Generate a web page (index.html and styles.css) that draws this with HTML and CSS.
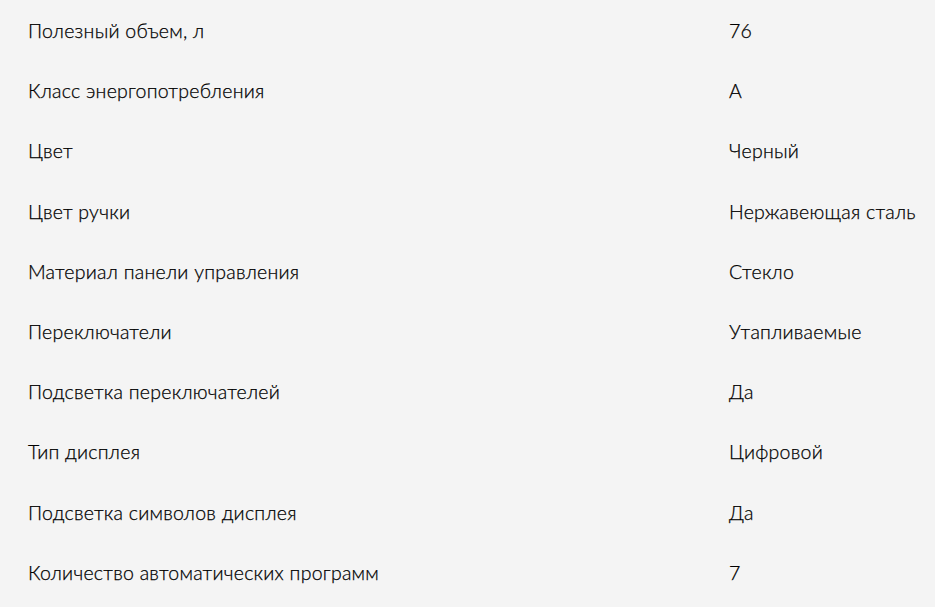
FILE: index.html
```html
<!DOCTYPE html>
<html lang="ru">
<head>
<meta charset="utf-8">
<link rel="stylesheet" href="styles.css">
</head>
<body>
<div class="specs">
  <div class="row"><div class="name">Полезный объем, л</div><div class="value">76</div></div>
  <div class="row"><div class="name">Класс энергопотребления</div><div class="value">A</div></div>
  <div class="row"><div class="name">Цвет</div><div class="value">Черный</div></div>
  <div class="row"><div class="name">Цвет ручки</div><div class="value">Нержавеющая сталь</div></div>
  <div class="row"><div class="name">Материал панели управления</div><div class="value">Стекло</div></div>
  <div class="row"><div class="name">Переключатели</div><div class="value">Утапливаемые</div></div>
  <div class="row"><div class="name">Подсветка переключателей</div><div class="value">Да</div></div>
  <div class="row"><div class="name">Тип дисплея</div><div class="value">Цифровой</div></div>
  <div class="row"><div class="name">Подсветка символов дисплея</div><div class="value">Да</div></div>
  <div class="row"><div class="name">Количество автоматических программ</div><div class="value">7</div></div>
</div>
</body>
</html>
```
FILE: styles.css
```css
html, body {
  margin: 0;
  padding: 0;
  background: #f4f4f4;
}
body {
  font-family: "Lato", "Noto Sans", sans-serif;
  font-size: 19.5px;
  font-weight: 300;
  letter-spacing: 0.25px;
  color: #000;
  -webkit-text-stroke: 0.25px #000;
}
.specs {
  padding: 1px 0 0 28px;
}
.row {
  display: grid;
  grid-template-columns: 701px 1fr;
  height: 60.2px;
  align-items: center;
}
.name, .value {
  line-height: 24px;
  white-space: nowrap;
}
```
